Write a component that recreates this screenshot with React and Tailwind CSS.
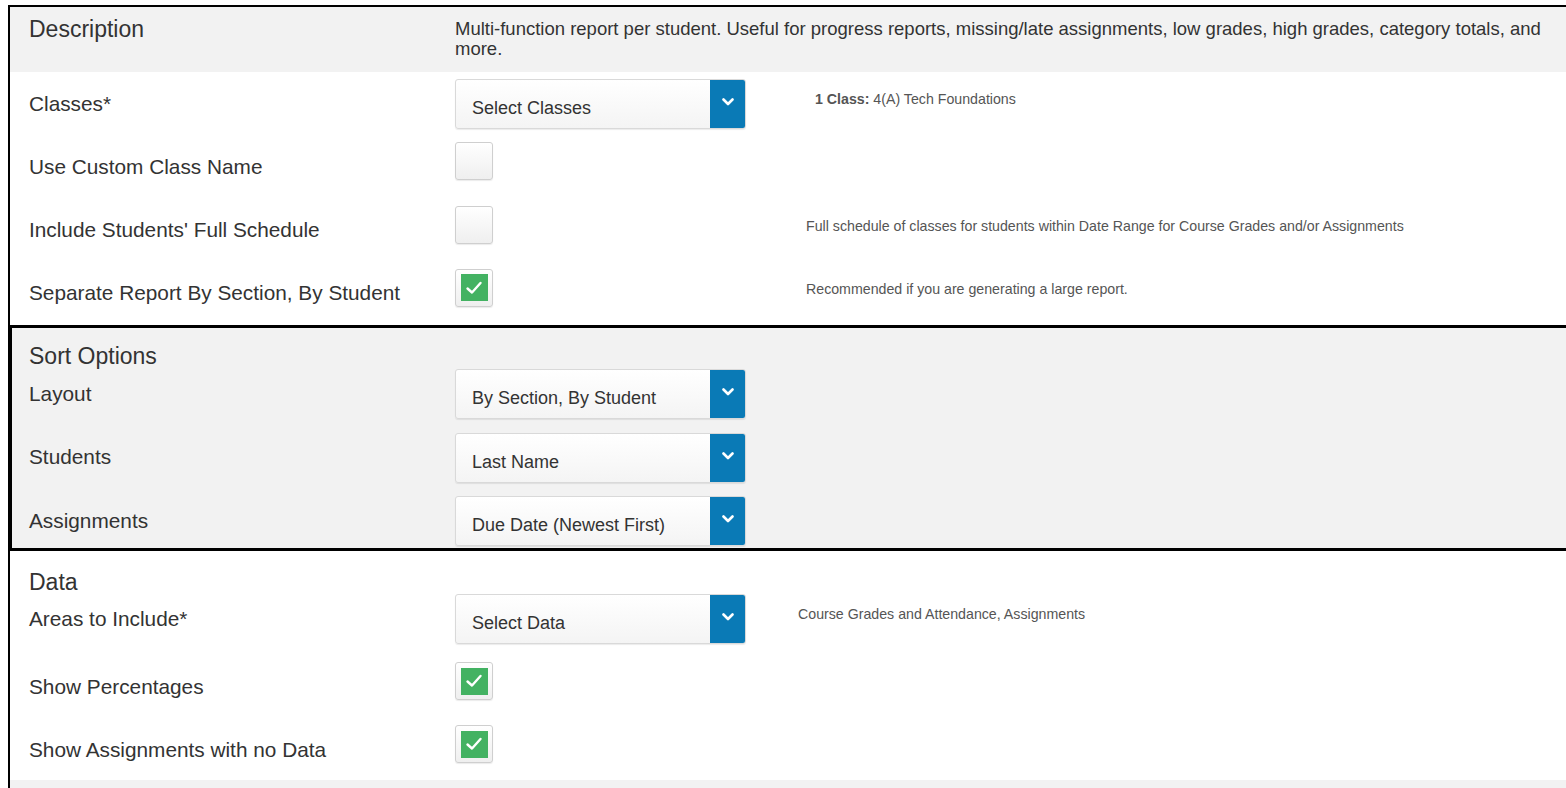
import React from 'react';

const font = { fontFamily: '"Liberation Sans", Arial, sans-serif' };

const Chevron = () => (
  <svg width="12" height="8" viewBox="0 0 12 8" className="-mt-[4px]">
    <path d="M1.5 1.5 L6 6 L10.5 1.5" fill="none" stroke="white" strokeWidth="2.6" strokeLinecap="round" strokeLinejoin="round" />
  </svg>
);

const Select = ({ value }) => (
  <div className="flex h-[50px] w-[291px] overflow-hidden rounded-[3px] border border-[#d9d9d9] bg-gradient-to-b from-white to-[#f4f4f4] shadow-[0_1px_1px_rgba(0,0,0,0.08)]">
    <div className="flex-1 pl-[16px] pt-[17px] text-[18px] leading-[22px] text-[#333]">{value}</div>
    <div className="flex w-[35px] items-center justify-center bg-[#0a7ab6]">
      <Chevron />
    </div>
  </div>
);

const Checkbox = ({ checked }) => (
  <div className="flex h-[38px] w-[38px] items-center justify-center rounded-[3px] border border-[#cfcfcf] bg-gradient-to-b from-white to-[#efefef] shadow-[0_1px_1px_rgba(0,0,0,0.08)]">
    {checked && (
      <div className="flex h-[27px] w-[27px] items-center justify-center bg-[#43b262]">
        <svg width="18" height="14" viewBox="0 0 18 14">
          <path d="M2.5 7.5 L7 11.5 L15.5 2" fill="none" stroke="white" strokeWidth="2.4" strokeLinecap="round" strokeLinejoin="round" />
        </svg>
      </div>
    )}
  </div>
);

// one form line: label column, control column, optional hint
const Row = ({ label, control, note, noteGap = 'pl-[60px]', h = 'h-[63.25px]' }) => (
  <div className={`flex items-start pt-[7px] pl-[19px] ${h}`}>
    <div className="w-[426px] pt-[12.5px] text-[20.8px] leading-[24px] text-[#333]">{label}</div>
    <div className="w-[291px]">{control}</div>
    {note && <div className={`${noteGap} pt-[11px] text-[14.2px] leading-[18px] text-[#555]`}>{note}</div>}
  </div>
);

export default function App() {
  return (
    <div className="min-h-screen bg-white pl-[8px] pt-[5px]" style={font}>
      <div className="border-l-2 border-t-2 border-black">
        {/* description */}
        <div className="flex h-[65px] items-start bg-[#f2f2f2] pl-[19px]">
          <div className="w-[426px] pt-[8px] text-[23px] leading-[28px] text-[#333]">Description</div>
          <div className="w-[1100px] pt-[12px] text-[18.5px] leading-[20px] text-[#333]">
            Multi-function report per student. Useful for progress reports, missing/late assignments, low grades, high grades, category totals, and more.
          </div>
        </div>

        <Row
          label="Classes*"
          control={<Select value="Select Classes" />}
          noteGap="pl-[69px]"
          note={<span><b className="font-bold">1 Class:</b> 4(A) Tech Foundations</span>}
        />
        <Row label="Use Custom Class Name" control={<Checkbox />} />
        <Row
          label="Include Students' Full Schedule"
          control={<Checkbox />}
          note="Full schedule of classes for students within Date Range for Course Grades and/or Assignments"
        />
        <Row
          label="Separate Report By Section, By Student"
          control={<Checkbox checked />}
          note="Recommended if you are generating a large report."
        />

        {/* sort options */}
        <div className="-ml-[2px] border-y-[3px] border-l-4 border-black bg-[#f2f2f2]">
          <div className="-ml-[2px]">
            <div className="h-[34px] pl-[19px] pt-[14px] text-[23px] leading-[28px] text-[#333]">Sort Options</div>
            <Row label="Layout" h="h-[63.5px]" control={<Select value="By Section, By Student" />} />
            <Row label="Students" h="h-[63.5px]" control={<Select value="Last Name" />} />
            <Row label="Assignments" h="h-[59px]" control={<Select value="Due Date (Newest First)" />} />
          </div>
        </div>

        {/* data */}
        <div className="h-[36px] pl-[19px] pt-[17px] text-[23px] leading-[28px] text-[#333]">Data</div>
        <Row
          label="Areas to Include*"
          h="h-[68px]"
          noteGap="pl-[52px]"
          control={<Select value="Select Data" />}
          note="Course Grades and Attendance, Assignments"
        />
        <Row label="Show Percentages" h="h-[63px]" control={<Checkbox checked />} />
        <Row label="Show Assignments with no Data" h="h-[62px]" control={<Checkbox checked />} />
        <div className="h-[40px] bg-[#f2f2f2]" />
      </div>
    </div>
  );
}
